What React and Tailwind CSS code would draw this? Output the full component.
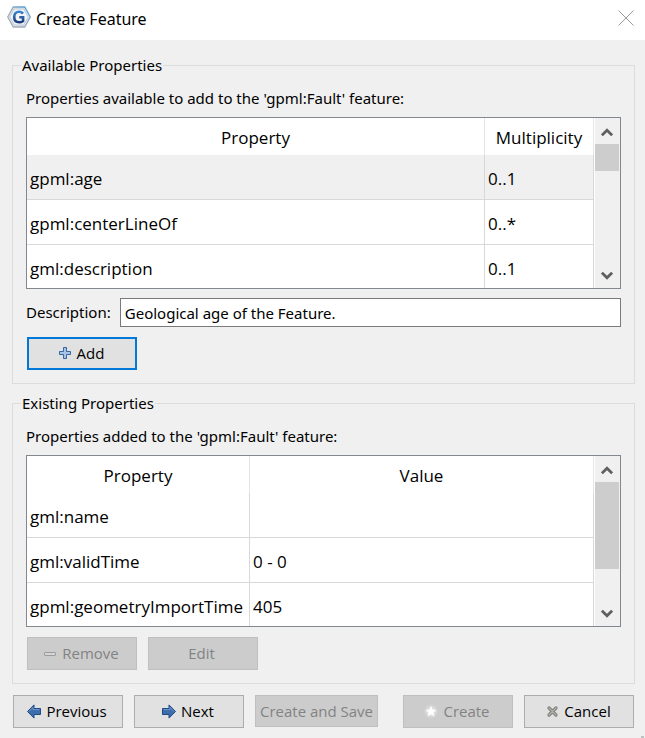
import React from "react";

function LogoIcon() {
  return (
    <svg width="24" height="22" viewBox="0 0 24 22" aria-hidden="true">
      <defs>
        <linearGradient id="hex" x1="0" y1="1" x2="1" y2="0">
          <stop offset="0" stopColor="#a9b3bd" />
          <stop offset="0.5" stopColor="#9aa9b8" />
          <stop offset="1" stopColor="#3f9be0" />
        </linearGradient>
        <linearGradient id="gee" x1="0" y1="0" x2="0" y2="1">
          <stop offset="0" stopColor="#3a86d0" />
          <stop offset="1" stopColor="#1d3b7a" />
        </linearGradient>
      </defs>
      <path d="M6.3 1h11.4L23.3 11l-5.6 10H6.3L.7 11z" fill="#dfe6ee" stroke="url(#hex)" strokeWidth="1.3" />
      <path d="M7.4 3h9.2l4.6 8-4.6 8H7.4l-4.600-8z" fill="#f3f6f9" stroke="#b9c3ce" strokeWidth="0.8" />
      <path d="M16 7.600C15 6.300 13.700 5.700 12 5.700 9 5.700 7.200 7.900 7.200 11s1.900 5.200 4.900 5.200c1.700 0 3-.5 4-1.300v-3.600h-3.800" fill="none" stroke="url(#gee)" strokeWidth="2.600" />
    </svg>
  );
}

function CloseIcon() {
  return (
    <svg width="16" height="16" viewBox="0 0 16 16" fill="none" stroke="#999" strokeWidth="1" aria-hidden="true">
      <path d="M.5.5l15 15M15.500.5l-15 15" />
    </svg>
  );
}

function PlusIcon() {
  return (
    <svg width="16" height="16" viewBox="-2 -1 16 16" aria-hidden="true">
      <path d="M4.500.5h3v4h4v3h-4v4h-3v-4h-4v-3h4z" fill="#a9c3e4" stroke="#3465a4" strokeLinejoin="round" />
    </svg>
  );
}

function MinusIcon() {
  return (
    <svg width="16" height="16" viewBox="-2 -3 16 16" aria-hidden="true">
      <rect x="0.5" y="3.5" width="11" height="3" rx="0.5" fill="#d6d6d6" stroke="#9b9b9b" />
    </svg>
  );
}

function ArrowIcon({ flip }) {
  return (
    <svg width="16" height="16" viewBox="-1 0 16 16" className={flip ? "-scale-x-100" : ""} aria-hidden="true">
      <path d="M.5 4.500h6.500V.9L13.500 7.500l-6.500 6.600v-3.600h-6.500z" fill="#3d6dab" stroke="#204a87" strokeLinejoin="round" />
      <path d="M1.500 5.600h6.500V3.400l4 4" fill="none" stroke="#7ba0cf" strokeWidth="0.8" />
    </svg>
  );
}

function StarIcon() {
  return (
    <svg width="16" height="16" viewBox="0 0 16 16" aria-hidden="true">
      <defs>
        <radialGradient id="glow">
          <stop offset="0.3" stopColor="#fff" stopOpacity="0.5" />
          <stop offset="1" stopColor="#fff" stopOpacity="0" />
        </radialGradient>
      </defs>
      <circle cx="8" cy="7.500" r="7.500" fill="url(#glow)" />
      <path d="M8 1.800l1.500 3.800 4 .3-3.100 2.600 1 4L8 10.300l-3.400 2.200 1-4-3.100-2.600 4-.3z" fill="#fff" />
    </svg>
  );
}

function CancelIcon() {
  return (
    <svg width="16" height="16" viewBox="-3 -2 16 16" strokeLinecap="round" aria-hidden="true">
      <path d="M2 2l7 7M9 2l-7 7" stroke="#7d7f7a" strokeWidth="3.200" />
      <path d="M2 2l7 7M9 2l-7 7" stroke="#b0b3ac" strokeWidth="1.200" />
    </svg>
  );
}

function Chevron({ down }) {
  return (
    <svg width="12" height="9" viewBox="0 0 12 9" className={down ? "rotate-180" : ""} aria-hidden="true">
      <path d="M.9 7.300L6 2.300l5.100 5" fill="none" stroke="#606060" strokeWidth="2.800" />
    </svg>
  );
}

function ScrollBar({ thumb }) {
  return (
    <div className="ml-px flex w-[25px] shrink-0 flex-col bg-[#f0f0f0]">
      <button type="button" aria-label="Scroll up" className="flex h-[26px] items-center justify-center pt-[2px] pr-px">
        <Chevron />
      </button>
      <div className={"mr-px bg-[#cdcdcd] " + thumb} />
      <button type="button" aria-label="Scroll down" className="mt-auto flex h-[26px] items-center justify-center pr-px">
        <Chevron down />
      </button>
    </div>
  );
}

function PropertyTable({ label, columns, rows, widths, selected, thumb }) {
  return (
    <div className="mt-2 flex h-[172px] border border-[#828790] bg-white">
      <div className="min-w-0 flex-1 overflow-hidden">
        <table
          aria-label={label}
          className="w-full table-fixed border-separate border-spacing-0 font-['Open_Sans','Noto_Sans',sans-serif] text-[17px] leading-6"
        >
          <colgroup>
            {widths.map((w, i) => (
              <col key={i} className={w} />
            ))}
          </colgroup>
          <thead>
            <tr className="h-[37px]">
              {columns.map((c) => (
                <th key={c} scope="col" className="border-r border-[#e5e5e5] p-0 pt-[2px] font-normal">
                  {c}
                </th>
              ))}
            </tr>
          </thead>
          <tbody>
            {rows.map((r, i) => (
              <tr key={r[0]} className={i === selected ? "h-[45px] bg-[#f0f0f0]" : "h-[45px]"}>
                {r.map((v, j) => (
                  <td key={j} className="border-r border-b border-[#d8d8d8] p-0 pt-1 pl-[3px] whitespace-nowrap">
                    {v}
                  </td>
                ))}
              </tr>
            ))}
          </tbody>
        </table>
      </div>
      <ScrollBar thumb={thumb} />
    </div>
  );
}

function Button({ children, primary, className = "h-[33px] w-[110px] pr-[3px]", ...rest }) {
  const look = primary ? "border-2 border-[#0078d7] bg-[#e1e1e1]" : "border border-[#adadad] bg-[#e1e1e1]";
  return (
    <button
      type="button"
      className={
        "flex items-center justify-center gap-1 font-['Open_Sans','Noto_Sans',sans-serif] whitespace-nowrap disabled:border-[#bfbfbf] disabled:bg-[#cccccc] disabled:text-[#838383] " +
        look + " " + className
      }
      {...rest}
    >
      {children}
    </button>
  );
}

function Group({ title, children }) {
  return (
    <fieldset className="border border-[#dcdcdc] px-[13px] pb-[13px]">
      <legend className="-ml-[5px] px-px leading-[22px]">{title}</legend>
      {children}
    </fieldset>
  );
}

export default function App() {
  return (
    <div className="bg-[#f0f0f0] font-['Noto_Sans',sans-serif] text-[15px] text-black">
      <header className="flex h-10 items-start justify-between bg-white pt-[6px] pr-[11px] pl-[7px]">
        <div className="flex gap-[5px]">
          <LogoIcon />
          <h1 className="text-base leading-[26px]">Create Feature</h1>
        </div>
        <button type="button" aria-label="Close" className="mt-1">
          <CloseIcon />
        </button>
      </header>
      <main className="flex flex-col gap-2 pt-[14px] pr-[10px] pb-[10px] pl-3">
        <Group title="Available Properties">
          <p className="mt-[11px] leading-[22px]">Properties available to add to the 'gpml:Fault' feature:</p>
          <PropertyTable
            label="Available properties"
            columns={["Property", "Multiplicity"]}
            widths={["", "w-[109px]"]}
            rows={[
              ["gpml:age", "0..1"],
              ["gpml:centerLineOf", "0..*"],
              ["gml:description", "0..1"],
            ]}
            selected={0}
            thumb="h-[27px]"
          />
          <div className="mt-[9px] flex items-center gap-[9px]">
            <label htmlFor="description">Description:</label>
            <input
              id="description"
              readOnly
              defaultValue="Geological age of the Feature."
              className="h-[29px] min-w-0 flex-1 border border-[#7a7a7a] bg-white px-1"
            />
          </div>
          <div className="mt-[10px] ml-px">
            <Button primary>
              <PlusIcon />
              Add
            </Button>
          </div>
        </Group>
        <Group title="Existing Properties">
          <p className="mt-[11px] leading-[22px]">Properties added to the 'gpml:Fault' feature:</p>
          <PropertyTable
            label="Existing properties"
            columns={["Property", "Value"]}
            widths={["w-[223px]", ""]}
            rows={[
              ["gml:name", ""],
              ["gml:validTime", "0 - 0"],
              ["gpml:geometryImportTime", "405"],
            ]}
            thumb="h-[87px]"
          />
          <div className="mt-[10px] ml-px flex gap-[11px]">
            <Button disabled>
              <MinusIcon />
              Remove
            </Button>
            <Button disabled>Edit</Button>
          </div>
        </Group>
        <div className="mt-[3px] mr-px ml-px flex gap-[11px]">
          <Button>
            <ArrowIcon flip />
            Previous
          </Button>
          <Button>
            <ArrowIcon />
            Next
          </Button>
          <Button disabled className="h-8 w-[123px]">
            Create and Save
          </Button>
          <Button disabled className="ml-auto h-[33px] w-[110px] pr-[3px]">
            <StarIcon />
            Create
          </Button>
          <Button>
            <CancelIcon />
            Cancel
          </Button>
        </div>
      </main>
      <div className="fixed right-px bottom-0 h-[2px] w-[3px] bg-[#bfbfbf]" />
    </div>
  );
}
